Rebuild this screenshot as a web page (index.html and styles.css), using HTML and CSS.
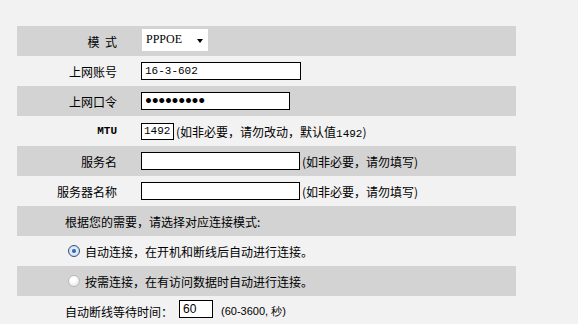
FILE: index.html
```html
<!DOCTYPE html>
<html>
<head>
    <meta charset="utf-8" />
    <title>WAN</title>
    <link rel="stylesheet" href="styles.css">
</head>
<body>
    <section id="wanwrapper">
        <div class="row gray">
            <div class="label">模&nbsp;&nbsp;式</div>
            <div class="value">
                <div class="select">PPPOE<span class="arrow"></span></div>
            </div>
        </div>
        <div class="row">
            <div class="label">上网账号</div>
            <div class="value"><input type="text" class="box w160" value="16-3-602" /></div>
        </div>
        <div class="row gray">
            <div class="label">上网口令</div>
            <div class="value"><input type="password" class="box w149" value="123456789" /></div>
        </div>
        <div class="row">
            <div class="label mtu">MTU</div>
            <div class="value">
                <input type="text" class="box w33 short" value="1492" />
                <span class="hint">(如非必要，请勿改动，默认值<span class="num">1492</span>)</span>
            </div>
        </div>
        <div class="row gray">
            <div class="label">服务名</div>
            <div class="value">
                <input type="text" class="box w159" value="" />
                <span class="hint">(如非必要，请勿填写)</span>
            </div>
        </div>
        <div class="row">
            <div class="label">服务器名称</div>
            <div class="value">
                <input type="text" class="box w159" value="" />
                <span class="hint">(如非必要，请勿填写)</span>
            </div>
        </div>
        <div class="row gray wide">根据您的需要，请选择对应连接模式:</div>
        <div class="row wide radiorow">
            <span class="radio checked"></span>自动连接，在开机和断线后自动进行连接。
        </div>
        <div class="row gray wide radiorow">
            <span class="radio"></span>按需连接，在有访问数据时自动进行连接。
        </div>
        <div class="row wide">
            自动断线等待时间：<input type="text" class="box w34 wait" value="60" /><span class="range">(60-3600, 秒)</span>
        </div>
    </section>
</body>
</html>
```
FILE: styles.css
```css
*{
    padding:0;
    margin:0;
    box-sizing:border-box;
}
body{
    background-color:#f2f2f2;
    font:12px "Noto Sans CJK SC", sans-serif;
    color:#000;
}
#wanwrapper{
    width:499px;
    margin:26px 0 0 17px;
}
.row{
    display:flex;
    align-items:center;
    height:30px;
}
.row.gray{
    background-color:#d3d3d3;
}
.label{
    width:100px;
    text-align:right;
}
.label.mtu{
    font:bold 11px "Liberation Mono", monospace;
}
.value{
    display:flex;
    align-items:center;
    padding-left:24px;
}
.row.wide{
    padding-left:48px;
}
.row.radiorow{
    padding-left:51px;
}

/* select */
.select{
    position:relative;
    width:66px;
    height:22px;
    margin-left:1px;
    margin-top:-2px;
    padding:3px 0 0 4px;
    background-color:#fff;
    font:12px "Liberation Serif", serif;
}
.arrow{
    position:absolute;
    right:5px;
    top:10px;
    border-left:3px solid transparent;
    border-right:3px solid transparent;
    border-top:4px solid #000;
}

/* inputs */
.box{
    height:18px;
    border:1px solid #000;
    background-color:#fff;
    padding:0 3px;
    font:11px "Liberation Mono", monospace;
    color:#000;
    outline:none;
}
.box.short{
    height:17px;
    padding:0 2px;
}
.w160{ width:160px; }
.w149{ width:149px; }
.w159{ width:159px; }
.w33{ width:33px; }
.w34{ width:34px; }
input[type=password]{
    font:bold 14px "DejaVu Sans", sans-serif;
    letter-spacing:-2.3px;
    padding-left:2px;
}
.hint{
    margin-left:2px;
}
.num{
    font:11px "Liberation Mono", monospace;
}
.wait{
    margin-left:6px;
    margin-top:-4px;
    font-family:"Liberation Sans", sans-serif;
    font-size:12px;
}
.range{
    margin-left:8px;
    font:11px "Liberation Sans", sans-serif;
}

/* radio */
.radio{
    display:inline-block;
    width:12px;
    height:12px;
    margin-right:5px;
    border-radius:50%;
    border:1px solid #b9b9b9;
    background:radial-gradient(circle at 40% 35%, #fff 30%, #dcdcdc 100%);
}
.radio.checked{
    border-color:#33507a;
    background:radial-gradient(circle, #1f5db8 0, #3b7ad6 25%, #e8eef6 34%, #c6d2e0 100%);
}
```
